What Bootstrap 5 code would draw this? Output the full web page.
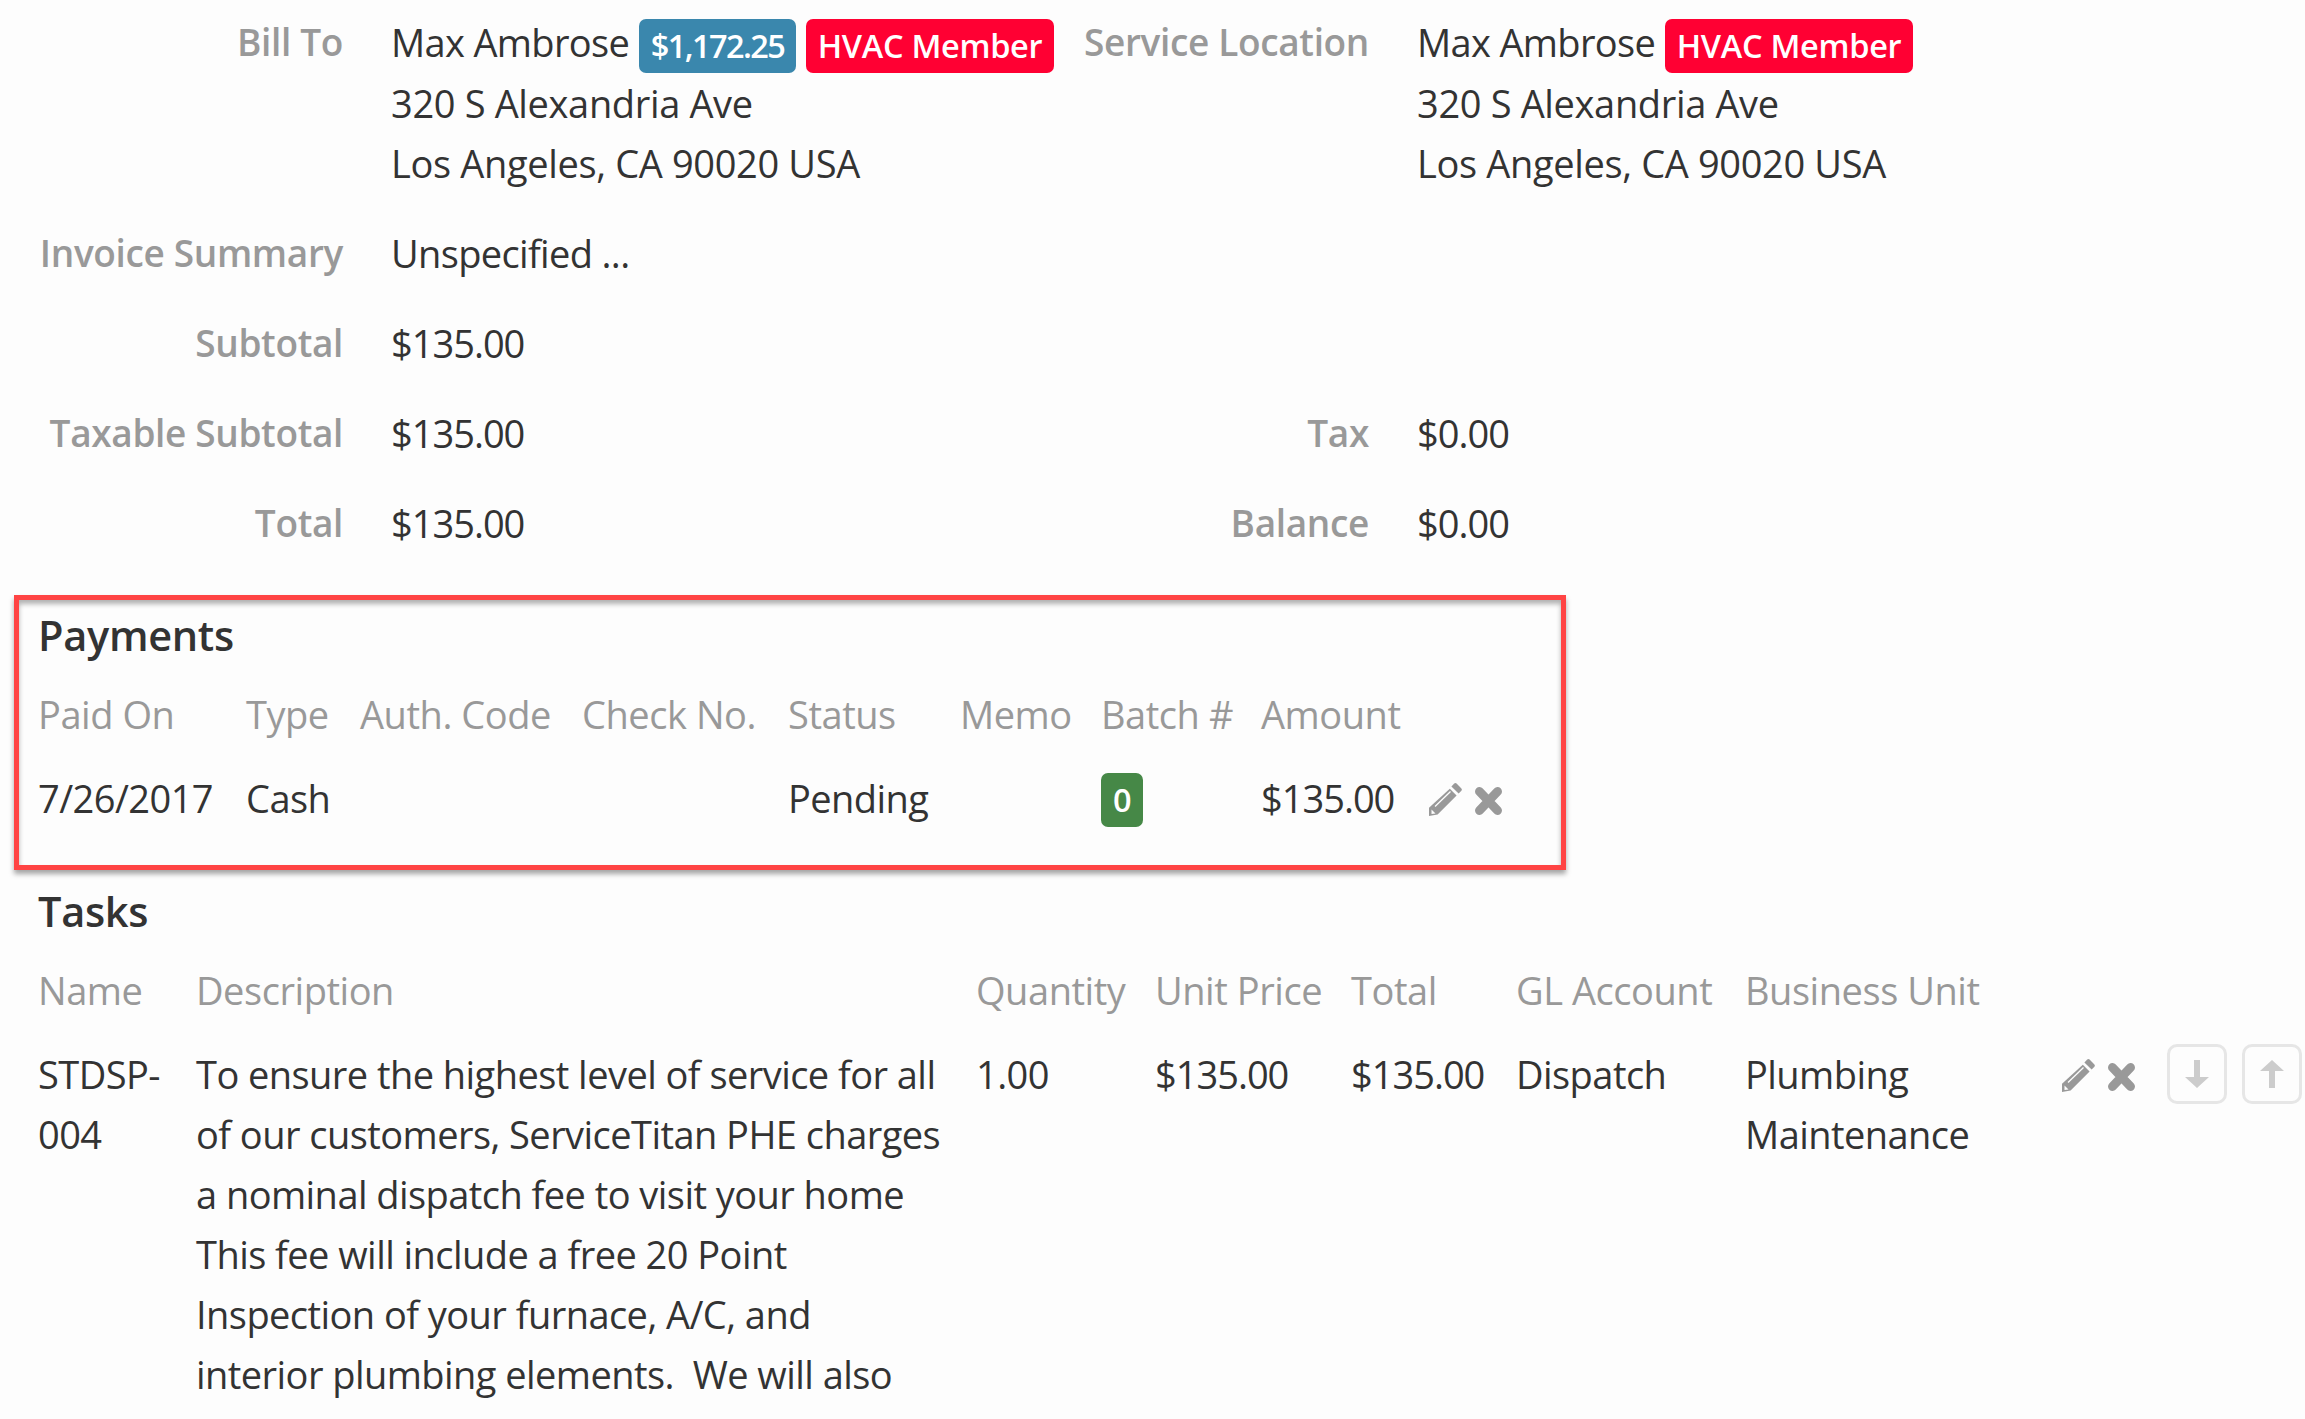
<!DOCTYPE html>
<html lang="en">
<head>
<meta charset="utf-8">
<title>Invoice</title>
<link href="https://cdn.jsdelivr.net/npm/bootstrap@5.3.0/dist/css/bootstrap.min.css" rel="stylesheet">
<style>
html,body{height:100%;overflow:hidden}
body{background:#fdfdfd;color:#333;font-family:"Open Sans","Noto Sans",sans-serif;font-size:38px;font-weight:400;line-height:60px;letter-spacing:-.35px}
.inv-page{padding:12px 0 0 38px}
.inv-grid{display:grid;grid-template-columns:305px 48px 691px 287px 48px 1fr;row-gap:30px;align-items:start}
.inv-label{color:#999;font-weight:600;font-size:37px;text-align:right;grid-column:1;white-space:nowrap;justify-self:end}
.inv-label.second{grid-column:4}
.inv-value{grid-column:3}
.inv-value.second{grid-column:6}
.inv-num{letter-spacing:-1px}
.inv-tight{letter-spacing:-.65px}
.inv-tag{display:inline-block;height:54px;line-height:54px;padding:0 12px;border-radius:7px;color:#fff;font-weight:600;font-size:32.5px;letter-spacing:-.3px;vertical-align:-1px}
.tag-blue{background:#3a87ad;letter-spacing:-1.6px}
.tag-red{background:#ff0033}
.tag-green{background:#468847;padding:0 12px;vertical-align:1px}
.inv-box{width:1552px;margin:42px 0 11px -24px;padding:5px 19px 0;height:275px;border:5px solid #ff4444;box-shadow:0 4px 5px rgba(0,0,0,.35),inset 0 4px 5px rgba(0,0,0,.3)}
.inv-title{font-size:41.5px;font-weight:600;line-height:60px;margin:0;color:#333;letter-spacing:-.3px}
.inv-table{--bs-table-bg:transparent;--bs-table-color:#333;table-layout:fixed;margin:19px 0 0;border-collapse:separate;border-spacing:0;width:1501px;letter-spacing:-.55px}
.inv-table th,.inv-table td{padding:0;border:0;vertical-align:top;box-shadow:none}
.inv-table th{color:#999;font-weight:400;padding-bottom:24px;white-space:nowrap;letter-spacing:-.45px}
.inv-table td.inv-num{letter-spacing:-1px}
.pay-1{width:208px}.pay-2{width:114px}.pay-3{width:222px}.pay-4{width:206px}.pay-5{width:172px}.pay-6{width:141px}.pay-7{width:160px}.pay-8{width:168px}.pay-9{width:110px}
.task-1{width:158px}.task-2{width:780px}.task-3{width:179px}.task-4{width:196px}.task-5{width:165px}.task-6{width:229px}.task-7{width:317px}.task-8{width:243px}
.inv-table.task-table{margin-top:19px;width:2267px}
.ico-wrap{display:flex;align-items:flex-start;gap:13px;padding-top:15px}
.ico-pencil{width:33px;height:33px;flex:none}
.ico-x{width:27px;height:28px;flex:none;margin-top:4px}
.ico-row{display:flex;align-items:flex-start;gap:15px}
.ico-row .ico-wrap{width:90px}
.arrow-btn{display:flex;align-items:center;justify-content:center;width:60px;height:60px;border:3px solid #e6e6e6;border-radius:10px;background:transparent;padding:0;flex:none}
.arrow-btn svg{width:24px;height:28px}
</style>
</head>
<body>
<main class="inv-page">
  <div class="inv-grid">
    <div class="inv-label">Bill To</div>
    <div class="inv-value"><span class="inv-tight">Max Ambrose</span> <span class="inv-tag tag-blue">$1,172.25</span> <span class="inv-tag tag-red">HVAC Member</span><br>320 S Alexandria Ave<br>Los Angeles, CA 90020 USA</div>
    <div class="inv-label second">Service Location</div>
    <div class="inv-value second"><span class="inv-tight">Max Ambrose</span> <span class="inv-tag tag-red">HVAC Member</span><br>320 S Alexandria Ave<br>Los Angeles, CA 90020 USA</div>

    <div class="inv-label">Invoice Summary</div>
    <div class="inv-value inv-tight">Unspecified ...</div>

    <div class="inv-label">Subtotal</div>
    <div class="inv-value inv-num">$135.00</div>

    <div class="inv-label">Taxable Subtotal</div>
    <div class="inv-value inv-num">$135.00</div>
    <div class="inv-label second">Tax</div>
    <div class="inv-value second inv-num">$0.00</div>

    <div class="inv-label">Total</div>
    <div class="inv-value inv-num">$135.00</div>
    <div class="inv-label second">Balance</div>
    <div class="inv-value second inv-num">$0.00</div>
  </div>

  <section class="inv-box">
    <h2 class="inv-title">Payments</h2>
    <table class="table inv-table">
      <colgroup><col class="pay-1"><col class="pay-2"><col class="pay-3"><col class="pay-4"><col class="pay-5"><col class="pay-6"><col class="pay-7"><col class="pay-8"><col class="pay-9"></colgroup>
      <thead><tr><th>Paid On</th><th>Type</th><th>Auth. Code</th><th>Check No.</th><th>Status</th><th>Memo</th><th>Batch #</th><th>Amount</th><th></th></tr></thead>
      <tbody><tr><td>7/26/2017</td><td>Cash</td><td></td><td></td><td>Pending</td><td></td><td><span class="inv-tag tag-green">0</span></td><td class="inv-num">$135.00</td>
        <td><div class="ico-wrap">
          <svg class="ico-pencil" viewBox="0 0 33 33" fill="#999"><path d="M25 .8a2 2 0 0 1 2.8 0l4.4 4.4a2 2 0 0 1 0 2.8l-2.6 2.6-7.2-7.2z"/><path d="M20.8 5.8 27.6 12.6 8.6 31.6 0 33V24.8z"/><path d="M6 23.5 21.5 8.5" stroke="#fdfdfd" stroke-width="1.3"/><path d="M2.5 26.5 6.5 30.5 2.5 31z" fill="#fdfdfd"/></svg>
          <svg class="ico-x" viewBox="0 0 27 28" fill="none" stroke="#999" stroke-width="9" stroke-linecap="round"><path d="M4.5 4.5 22.5 23.5M22.5 4.5 4.5 23.5"/></svg>
        </div></td></tr></tbody>
    </table>
  </section>

  <section>
    <h2 class="inv-title">Tasks</h2>
    <table class="table inv-table task-table">
      <colgroup><col class="task-1"><col class="task-2"><col class="task-3"><col class="task-4"><col class="task-5"><col class="task-6"><col class="task-7"><col class="task-8"></colgroup>
      <thead><tr><th>Name</th><th>Description</th><th>Quantity</th><th>Unit Price</th><th>Total</th><th>GL Account</th><th>Business Unit</th><th></th></tr></thead>
      <tbody><tr><td>STDSP-<br>004</td>
        <td>To ensure the highest level of service for all<br>of our customers, ServiceTitan PHE charges<br>a nominal dispatch fee to visit your home<br>This fee will include a free 20 Point<br>Inspection of your furnace, A/C, and<br>interior plumbing elements.&nbsp; We will also</td>
        <td>1.00</td><td class="inv-num">$135.00</td><td class="inv-num">$135.00</td><td>Dispatch</td><td>Plumbing<br>Maintenance</td>
        <td><div class="ico-row">
          <div class="ico-wrap">
            <svg class="ico-pencil" viewBox="0 0 33 33" fill="#999"><path d="M25 .8a2 2 0 0 1 2.8 0l4.4 4.4a2 2 0 0 1 0 2.8l-2.6 2.6-7.2-7.2z"/><path d="M20.8 5.8 27.6 12.6 8.6 31.6 0 33V24.8z"/><path d="M6 23.5 21.5 8.5" stroke="#fdfdfd" stroke-width="1.3"/><path d="M2.5 26.5 6.5 30.5 2.5 31z" fill="#fdfdfd"/></svg>
            <svg class="ico-x" viewBox="0 0 27 28" fill="none" stroke="#999" stroke-width="9" stroke-linecap="round"><path d="M4.5 4.5 22.5 23.5M22.5 4.5 4.5 23.5"/></svg>
          </div>
          <button type="button" class="arrow-btn" aria-label="Move down"><svg viewBox="0 0 24 28" fill="#ccc"><path d="M9 0h6v17h9L12 28 0 17h9z"/></svg></button>
          <button type="button" class="arrow-btn" aria-label="Move up"><svg viewBox="0 0 24 28" fill="#ccc"><path d="M9 28h6V11h9L12 0 0 11h9z"/></svg></button>
        </div></td></tr></tbody>
    </table>
  </section>
</main>
</body>
</html>
